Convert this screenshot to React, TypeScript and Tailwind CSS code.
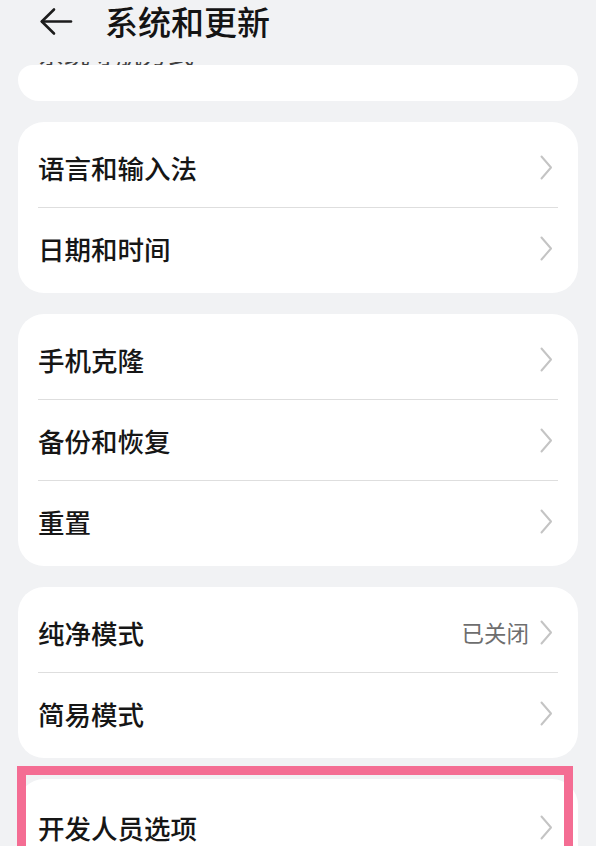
import React from 'react';

type Row = { label: string; value?: string };

const groups: Row[][] = [
  [{ label: '语言和输入法' }, { label: '日期和时间' }],
  [{ label: '手机克隆' }, { label: '备份和恢复' }, { label: '重置' }],
  [{ label: '纯净模式', value: '已关闭' }, { label: '简易模式' }],
];

function IconBack() {
  return (
    <svg width="34" height="29" viewBox="0 0 34 29" fill="none" stroke="#1c1c1c" strokeWidth={2.6} strokeLinecap="round" strokeLinejoin="round">
      <path d="M32 14.5H3" />
      <path d="M15 2.5L2.8 14.5L15 26.5" />
    </svg>
  );
}

function Chevron() {
  return (
    <svg width="13" height="25" viewBox="0 0 13 25" fill="none" stroke="#c4c4c4" strokeWidth={2} strokeLinecap="round" strokeLinejoin="round">
      <path d="M1.5 1.5L11 12.5L1.5 23.5" />
    </svg>
  );
}

function ItemRow({ row }: { row: Row }) {
  return (
    <div className="flex h-[80px] items-center pl-5 pr-[25px]">
      <span className="flex-1 pt-[2px] text-[26.5px] font-medium text-[#161616]">{row.label}</span>
      {row.value && <span className="mr-[11px] pt-[2px] text-[22.5px] text-[#6e6e6e]">{row.value}</span>}
      <Chevron />
    </div>
  );
}

function Card({ rows }: { rows: Row[] }) {
  return (
    <div className="rounded-[26px] bg-white py-[5px]">
      {rows.map((row, i) => (
        <div key={row.label}>
          {i > 0 && <div className="mx-5 h-px bg-[#dedede]" />}
          <ItemRow row={row} />
        </div>
      ))}
    </div>
  );
}

export default function App() {
  return (
    <div
      className="h-[846px] overflow-hidden bg-[#f1f2f4]"
      style={{ fontFamily: '"Noto Sans CJK SC", "Noto Sans", sans-serif' }}
    >
      {/* 标题栏 */}
      <header className="flex h-[62px] items-start pl-[39px] pt-[7px]">
        <IconBack />
        <h1 className="ml-[32px] -mt-[5px] text-[33px] font-medium leading-[38px] text-[#141414]">系统和更新</h1>
      </header>

      {/* 滚到标题下的上一项文字 */}
      <div className="h-[3px] overflow-hidden pl-[38px] opacity-80">
        <p className="-mt-[22px] text-[26px] leading-[26px] text-[#141414]">系统导航方式</p>
      </div>

      <div className="flex flex-col gap-[21px] px-[18px]">
        <div className="h-[36px] rounded-b-[26px] rounded-t-[18px] bg-white" />
        {groups.map((rows, i) => (
          <Card key={i} rows={rows} />
        ))}

        {/* 开发人员选项 + 标注框 */}
        <div className="relative">
          <div className="rounded-[26px] bg-white pb-[5px] pt-[8px]">
            <div className="flex h-[80px] items-center pl-5 pr-[25px]">
              <span className="flex-1 pt-[2px] text-[26.5px] font-medium text-[#161616]">开发人员选项</span>
              <Chevron />
            </div>
          </div>
          <div className="absolute -left-px -top-[13px] right-[5px] h-[120px] border-[9px] border-[#f46d93]" />
        </div>
      </div>
    </div>
  );
}
